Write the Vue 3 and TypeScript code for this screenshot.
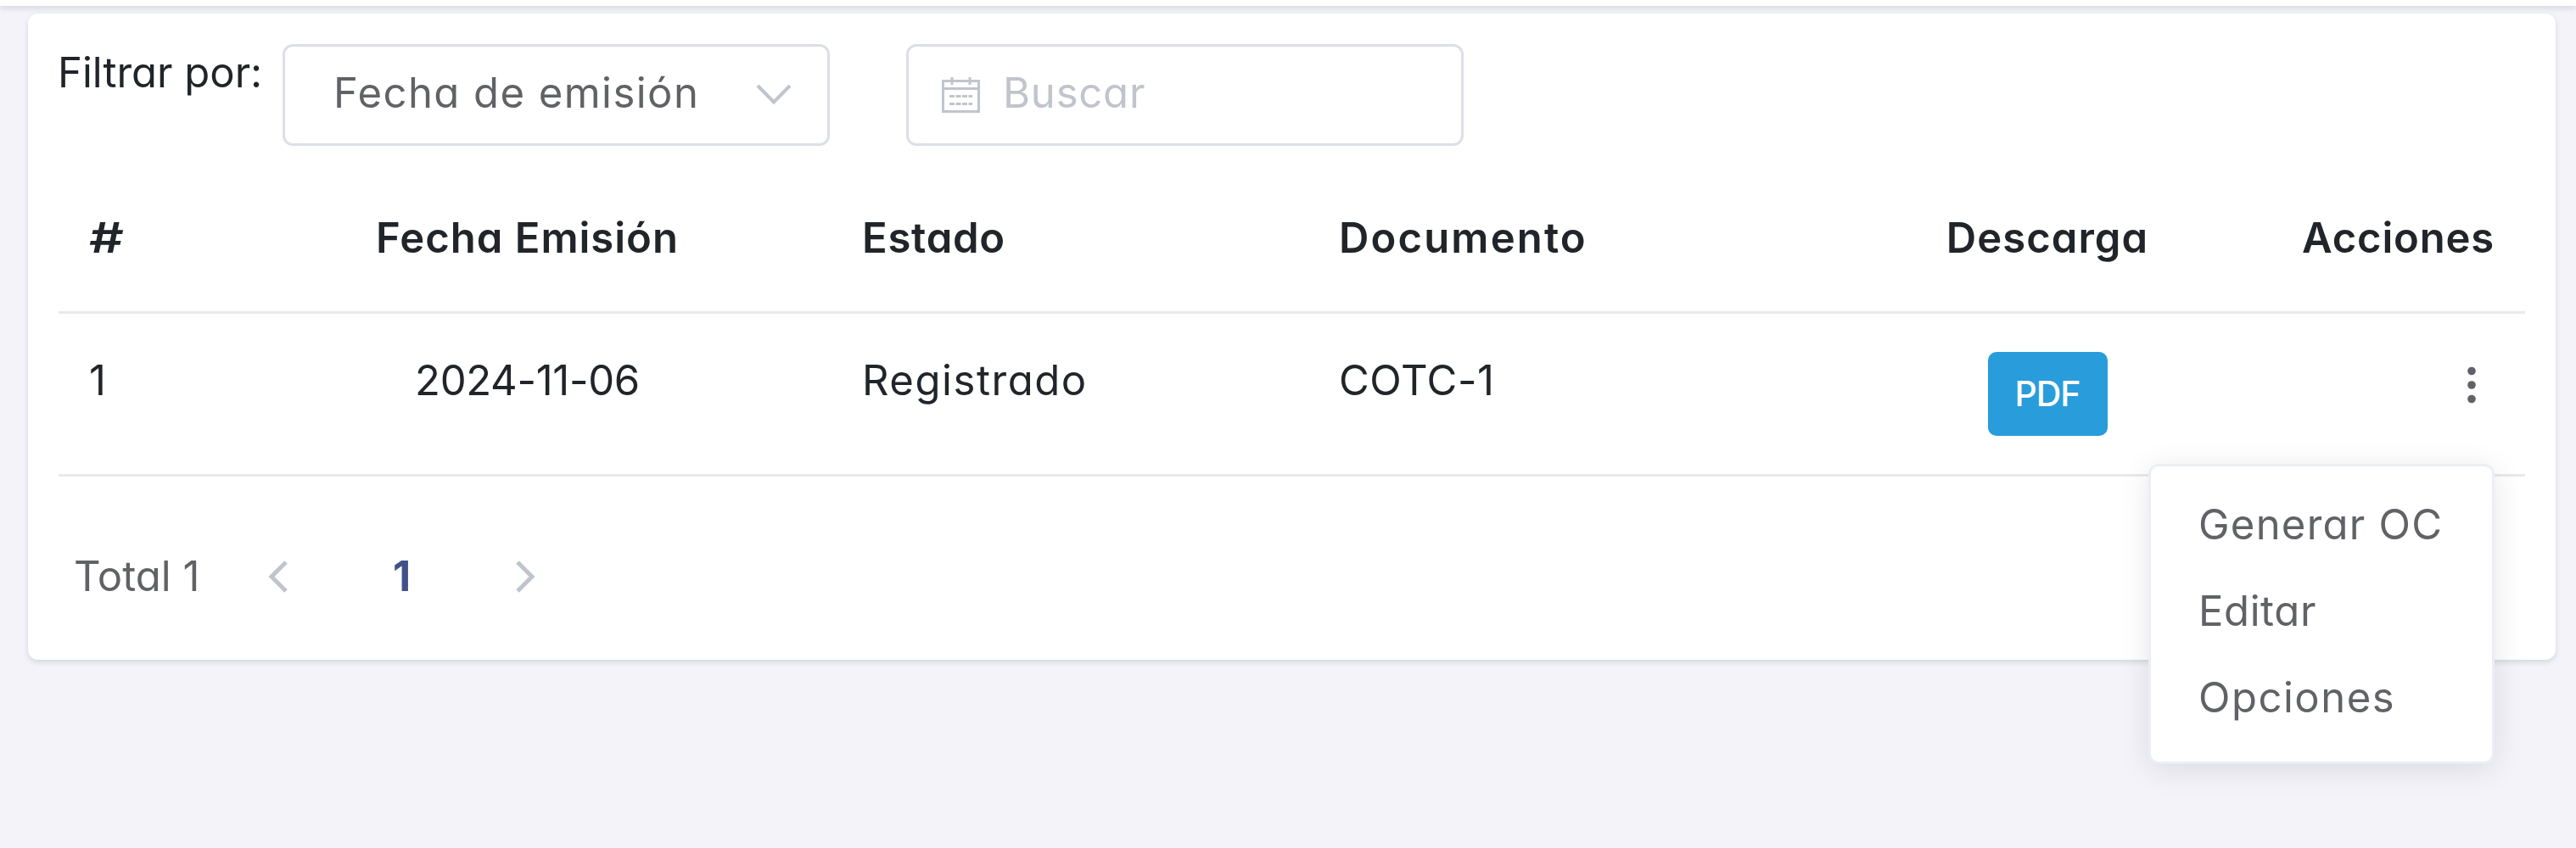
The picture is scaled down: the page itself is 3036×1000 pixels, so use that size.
<script setup lang="ts">
interface Quote {
  id: number
  date: string
  status: string
  document: string
}

const rows: Quote[] = [
  { id: 1, date: '2024-11-06', status: 'Registrado', document: 'COTC-1' },
]
</script>

<template>
  <div class="page">
    <div class="topbar"></div>
    <main class="card">
      <div class="filters">
        <span class="label">Filtrar por:</span>
        <div class="select">
          <span class="select-value">Fecha de emisión</span>
          <svg class="chevron" width="42" height="26" viewBox="0 0 42 26">
            <path d="M2 2 21 21.500 40 2" />
          </svg>
        </div>
        <div class="search">
          <svg class="calendar" width="45" height="42" viewBox="0 0 45 42">
            <path d="M1.500 4.500H43.500V40.500H1.500ZM1.500 13.500H43.500M12 0V9M33 0V9" />
            <path class="entries" d="M9 22.500H36M9 31.500H36" />
          </svg>
          <span class="placeholder">Buscar</span>
        </div>
      </div>

      <div class="row head">
        <div class="cell id"><span class="hash">#</span></div>
        <div class="cell center h-date">Fecha Emisión</div>
        <div class="cell text h-status">Estado</div>
        <div class="cell text h-doc">Documento</div>
        <div class="cell center h-file">Descarga</div>
        <div class="cell actions h-actions">Acciones</div>
      </div>

      <div v-for="row in rows" :key="row.id" class="row body">
        <div class="cell id">{{ row.id }}</div>
        <div class="cell center date">{{ row.date }}</div>
        <div class="cell text status">{{ row.status }}</div>
        <div class="cell text doc">{{ row.document }}</div>
        <div class="cell center"><button class="pdf">PDF</button></div>
        <div class="cell actions">
          <svg class="dots" width="12" height="46" viewBox="0 0 12 46">
            <circle cx="6" cy="6.500" r="4.800" />
            <circle cx="6" cy="23" r="4.800" />
            <circle cx="6" cy="39.500" r="4.800" />
          </svg>
          <div class="menu">
            <div class="item generate">Generar OC</div>
            <div class="item edit">Editar</div>
            <div class="item options">Opciones</div>
          </div>
        </div>
      </div>

      <div class="pagination">
        <span class="total">Total 1</span>
        <svg class="arrow" width="26" height="38" viewBox="0 0 26 38">
          <path d="M22 2 5 19 22 36" />
        </svg>
        <span class="current">1</span>
        <svg class="arrow" width="26" height="38" viewBox="0 0 26 38">
          <path d="M4 2 21 19 4 36" />
        </svg>
      </div>
    </main>
  </div>
</template>

<style>
body {
  background: #f3f3f9;
}
</style>

<style scoped>
.page {
  height: 1000px;
  overflow: hidden;
  background: #f3f3f9;
  color: #212529;
  font-family: Inter, sans-serif;
  font-size: 49px;
  line-height: 72px;
  font-feature-settings: 'cv11';
  white-space: nowrap;
}
.topbar {
  height: 7px;
  background: #fff;
  box-shadow: 0 3px 6px rgba(56, 65, 74, 0.15);
}
.card {
  position: relative;
  box-sizing: border-box;
  height: 762px;
  margin: 9px 24px 0 33px;
  padding: 36px;
  background: #fff;
  border-radius: 12px;
  box-shadow: 0 3px 6px rgba(56, 65, 74, 0.15);
}
.filters {
  display: flex;
  height: 120px;
}
.label {
  width: 265px;
  margin: -2px 0 0 -1px;
}
.select,
.search {
  display: flex;
  align-items: center;
  box-sizing: border-box;
  height: 120px;
  border: 3px solid #dcdfe6;
  border-radius: 12px;
}
.select {
  justify-content: space-between;
  width: 645px;
  padding: 0 42px 0 57px;
  color: #606266;
}
.select-value {
  margin-top: -4px;
  letter-spacing: 1.45px;
}
.chevron,
.calendar,
.arrow {
  fill: none;
  stroke: #c0c4cc;
}
.chevron {
  stroke-width: 4;
}
.search {
  width: 657px;
  margin-left: 90px;
  padding-left: 39px;
}
.calendar {
  stroke-width: 3;
}
.entries {
  stroke-dasharray: 6 1.5;
}
.placeholder {
  margin: -4px 0 0 27px;
  color: #c0c4cc;
  letter-spacing: 0.8px;
}
.row {
  display: grid;
  grid-template-columns: 231px 643px 562px 695px 426px 350px;
  box-sizing: border-box;
  border-bottom: 3px solid #e9e9e9;
}
.head {
  height: 198px;
  padding-top: 73px;
  font-weight: 600;
}
.body {
  height: 192px;
  padding-top: 43px;
}
.id {
  padding-left: 36px;
}
.hash {
  display: inline-block;
  transform: scaleX(1.3);
  transform-origin: left;
}
.center {
  text-align: center;
}
.text {
  padding-left: 73px;
}
.actions {
  position: relative;
  padding-right: 36px;
  text-align: right;
}
.h-date {
  letter-spacing: 1px;
}
.h-status {
  letter-spacing: 0.75px;
}
.h-doc {
  letter-spacing: 2.15px;
}
.h-file {
  letter-spacing: 1.05px;
}
.h-actions {
  letter-spacing: 0.8px;
}
.date {
  letter-spacing: -0.3px;
}
.status {
  letter-spacing: 1.55px;
}
.doc {
  letter-spacing: 0.55px;
}
.pdf {
  display: block;
  width: 141px;
  height: 99px;
  margin: 2px auto 0;
  padding: 0 0 2px;
  border: 0;
  border-radius: 10px;
  background: #299cdb;
  color: #fff;
  font: 500 41px/94px Inter, sans-serif;
  letter-spacing: -1px;
}
.dots {
  display: block;
  margin: 18px 21px 0 auto;
  fill: #606266;
}
.menu {
  position: absolute;
  top: 134px;
  right: 36px;
  z-index: 2;
  box-sizing: border-box;
  width: 408px;
  height: 354px;
  padding: 18px 0 0 56px;
  border: 3px solid #ebeef5;
  border-radius: 12px;
  background: #fff;
  box-shadow: 0 6px 36px rgba(0, 0, 0, 0.1);
  color: #606266;
  text-align: left;
}
.item {
  line-height: 102px;
}
.generate {
  letter-spacing: 1.25px;
}
.edit {
  letter-spacing: 0.6px;
}
.options {
  letter-spacing: 1.5px;
}
.pagination {
  display: flex;
  align-items: center;
  margin-top: 82px;
  padding-left: 18px;
  color: #606266;
}
.total {
  width: 228px;
}
.arrow {
  stroke-width: 5;
}
.current {
  width: 265px;
  color: #405189;
  font-weight: 700;
  text-align: center;
}
</style>
